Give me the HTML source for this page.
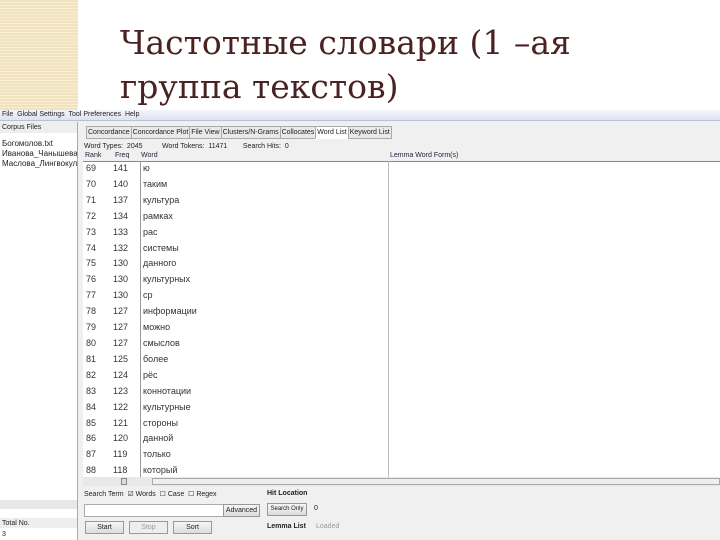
<!DOCTYPE html>
<html><head><meta charset="utf-8"><style>
*{margin:0;padding:0;box-sizing:border-box}
body{width:720px;height:540px;overflow:hidden;background:#fff;position:relative;font-family:"Liberation Sans","DejaVu Sans",sans-serif}
.a{position:absolute}
.deco{left:0;top:0;width:78px;height:110px;background:repeating-linear-gradient(#f1e3bf 0 2px,#f7eed6 2px 3px)}
.title{left:120px;top:21px;font-family:"DejaVu Serif","Liberation Serif",serif;font-size:33px;line-height:44px;color:#4a2222}
.s{font-size:7px;color:#222;white-space:nowrap}
.row{position:absolute;font-size:9px;color:#333}
.btn{position:absolute;height:13px;border:1px solid #999;background:linear-gradient(#f6f6f6,#dcdcdc);font-size:7px;text-align:center;line-height:11px;color:#222;white-space:nowrap;overflow:hidden}
.tabs{left:86px;top:126px;height:13px;display:flex}
.tabs span{font-size:7px;color:#222;border:1px solid #aaa;background:#e9e9e9;padding:0 1px;line-height:11px;white-space:nowrap;margin-right:-1px}
.tabs span.on{background:#fff;border-bottom-color:#fff}
</style></head><body>
<div class="a deco"></div>
<div class="a title">Частотные словари (1 –ая<br>группа текстов)</div>

<div class="a" style="left:0;top:110px;width:720px;height:430px;background:#f0f0f0"></div>
<div class="a" style="left:0;top:110px;width:720px;height:11px;background:linear-gradient(#f4f5fb,#dfe3f0);border-bottom:1px solid #b8bfd6"></div>
<div class="a s" style="left:2px;top:111px">File &nbsp;Global Settings &nbsp;Tool Preferences &nbsp;Help</div>

<div class="a" style="left:0;top:122px;width:78px;height:418px;background:#fff;border-right:1px solid #aaa"></div>
<div class="a" style="left:0;top:122px;width:77px;height:11px;background:#eee"></div>
<div class="a s" style="left:2px;top:124px">Corpus Files</div>
<div class="a s" style="left:2px;top:139px;font-size:8px">Богомолов.txt</div>
<div class="a s" style="left:2px;top:149px;font-size:8px;width:75px;overflow:hidden">Иванова_Чанышева_</div>
<div class="a s" style="left:2px;top:159px;font-size:8px;width:75px;overflow:hidden">Маслова_Лингвокуль</div>
<div class="a" style="left:0;top:500px;width:77px;height:9px;background:#e8e8e8"></div>
<div class="a" style="left:0;top:518px;width:77px;height:10px;background:#eee"></div>
<div class="a s" style="left:2px;top:520px">Total No.</div>
<div class="a s" style="left:2px;top:531px">3</div>

<div class="a tabs"><span>Concordance</span><span>Concordance Plot</span><span>File View</span><span>Clusters/N-Grams</span><span>Collocates</span><span class="on">Word List</span><span>Keyword List</span></div>
<div class="a s" style="left:84px;top:143px">Word Types: &nbsp;2045 &nbsp;&nbsp;&nbsp;&nbsp;&nbsp;&nbsp;&nbsp;&nbsp;&nbsp;Word Tokens: &nbsp;11471 &nbsp;&nbsp;&nbsp;&nbsp;&nbsp;&nbsp;&nbsp;Search Hits: &nbsp;0</div>
<div class="a s" style="left:85px;top:152px;color:#224">Rank &nbsp;&nbsp;&nbsp;&nbsp;&nbsp;&nbsp;Freq &nbsp;&nbsp;&nbsp;&nbsp;&nbsp;Word</div>
<div class="a s" style="left:390px;top:152px;color:#224">Lemma Word Form(s)</div>

<div class="a" style="left:83px;top:161px;width:637px;height:316px;background:#fff;border-top:1px solid #888"></div>
<div class="a" style="left:140px;top:161px;width:1px;height:316px;background:#999"></div>
<div class="a" style="left:388px;top:161px;width:1px;height:316px;background:#bbb"></div>

<div class="row" style="left:86px;top:161px;line-height:15.9px">69<br>70<br>71<br>72<br>73<br>74<br>75<br>76<br>77<br>78<br>79<br>80<br>81<br>82<br>83<br>84<br>85<br>86<br>87<br>88</div>
<div class="row" style="left:113px;top:161px;line-height:15.9px">141<br>140<br>137<br>134<br>133<br>132<br>130<br>130<br>130<br>127<br>127<br>127<br>125<br>124<br>123<br>122<br>121<br>120<br>119<br>118</div>
<div class="row" style="left:143px;top:161px;line-height:15.9px">ю<br>таким<br>культура<br>рамках<br>рас<br>системы<br>данного<br>культурных<br>ср<br>информации<br>можно<br>смыслов<br>более<br>рёс<br>коннотации<br>культурные<br>стороны<br>данной<br>только<br>который</div>

<div class="a" style="left:83px;top:477px;width:637px;height:9px;background:#e8e8e8"></div>
<div class="a" style="left:121px;top:478px;width:6px;height:7px;background:#ddd;border:1px solid #888"></div>
<div class="a" style="left:152px;top:478px;width:568px;height:7px;background:#eee;border:1px solid #aaa"></div>

<div class="a s" style="left:84px;top:490px">Search Term &nbsp;☑ Words &nbsp;☐ Case &nbsp;☐ Regex</div>
<div class="a s" style="left:267px;top:490px;font-weight:bold">Hit Location</div>
<div class="a" style="left:84px;top:504px;width:176px;height:13px;background:#fff;border:1px solid #aaa"></div>
<div class="btn" style="left:223px;top:504px;width:37px">Advanced</div>
<div class="btn" style="left:267px;top:503px;width:40px;font-size:6px">Search Only</div>
<div class="a s" style="left:314px;top:505px">0</div>
<div class="btn" style="left:85px;top:521px;width:39px">Start</div>
<div class="btn" style="left:129px;top:521px;width:39px;color:#999;background:#eee">Stop</div>
<div class="btn" style="left:173px;top:521px;width:39px">Sort</div>
<div class="a s" style="left:267px;top:523px;font-weight:bold">Lemma List</div>
<div class="a s" style="left:316px;top:523px;color:#999">Loaded</div>
</body></html>
